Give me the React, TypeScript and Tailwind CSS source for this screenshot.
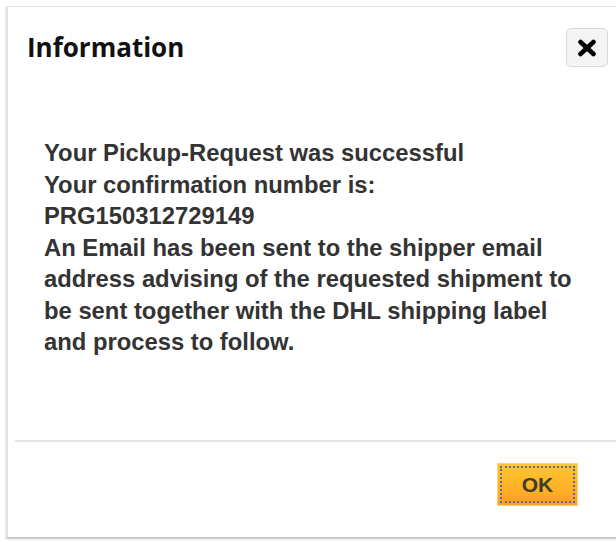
import React from 'react';

const lines = [
  'Your Pickup-Request was successful',
  'Your confirmation number is:',
  'PRG150312729149',
  'An Email has been sent to the shipper email',
  'address advising of the requested shipment to',
  'be sent together with the DHL shipping label',
  'and process to follow.',
];

function InfoDialog() {
  return (
    <div className="flex h-[531px] w-[620px] flex-col border-l-2 border-t border-[#e4e4e4] bg-white shadow-[0_2px_2px_rgba(0,0,0,0.25)]">
      {/* header */}
      <div className="flex items-start justify-between pl-[19px] pr-[18px] pt-[21px]">
        <h2 className="mt-[2px] text-[26px] font-bold leading-[34px] text-[#111]" style={{ fontFamily: '"Open Sans", sans-serif' }}>
          Information
        </h2>
        <button className="flex h-[39px] w-[42px] items-center justify-center rounded-[5px] border border-[#d9d9d9] bg-[#f4f4f4]">
          <svg width="20" height="18" viewBox="0 0 20 18">
            <path d="M3.5 3 L16.5 15 M16.5 3 L3.5 15" stroke="#000" strokeWidth="4.6" strokeLinecap="round" />
          </svg>
        </button>
      </div>

      {/* message */}
      <div className="flex-1 pl-[36px] pt-[70px]">
        <p className="text-[23.8px] font-bold leading-[31.5px] text-[#333]" style={{ fontFamily: '"Liberation Sans", Arial, sans-serif' }}>
          {lines.map((l, i) => (
            <span key={i} className="block whitespace-nowrap">{l}</span>
          ))}
        </p>
      </div>

      {/* footer */}
      <div className="ml-[7px] h-[2px] bg-[#e6e6e6]" />
      <div className="flex h-[95px] items-start pl-[489px] pt-[21px]">
        <button className="flex h-[43px] w-[81px] items-center justify-center border border-[#ffd27a] bg-gradient-to-b from-[#ffc72e] to-[#ff9f22] p-[2px]">
          <span className="flex h-full w-full items-center justify-center border-2 border-dotted border-[#5a6aa0] text-[21px] font-bold text-[#3d3d28]" style={{ fontFamily: '"Liberation Sans", Arial, sans-serif' }}>
            OK
          </span>
        </button>
      </div>
    </div>
  );
}

export default function App() {
  return (
    <div className="h-[541px] w-[616px] overflow-hidden bg-white pl-[6px] pt-[6px]">
      <InfoDialog />
    </div>
  );
}
